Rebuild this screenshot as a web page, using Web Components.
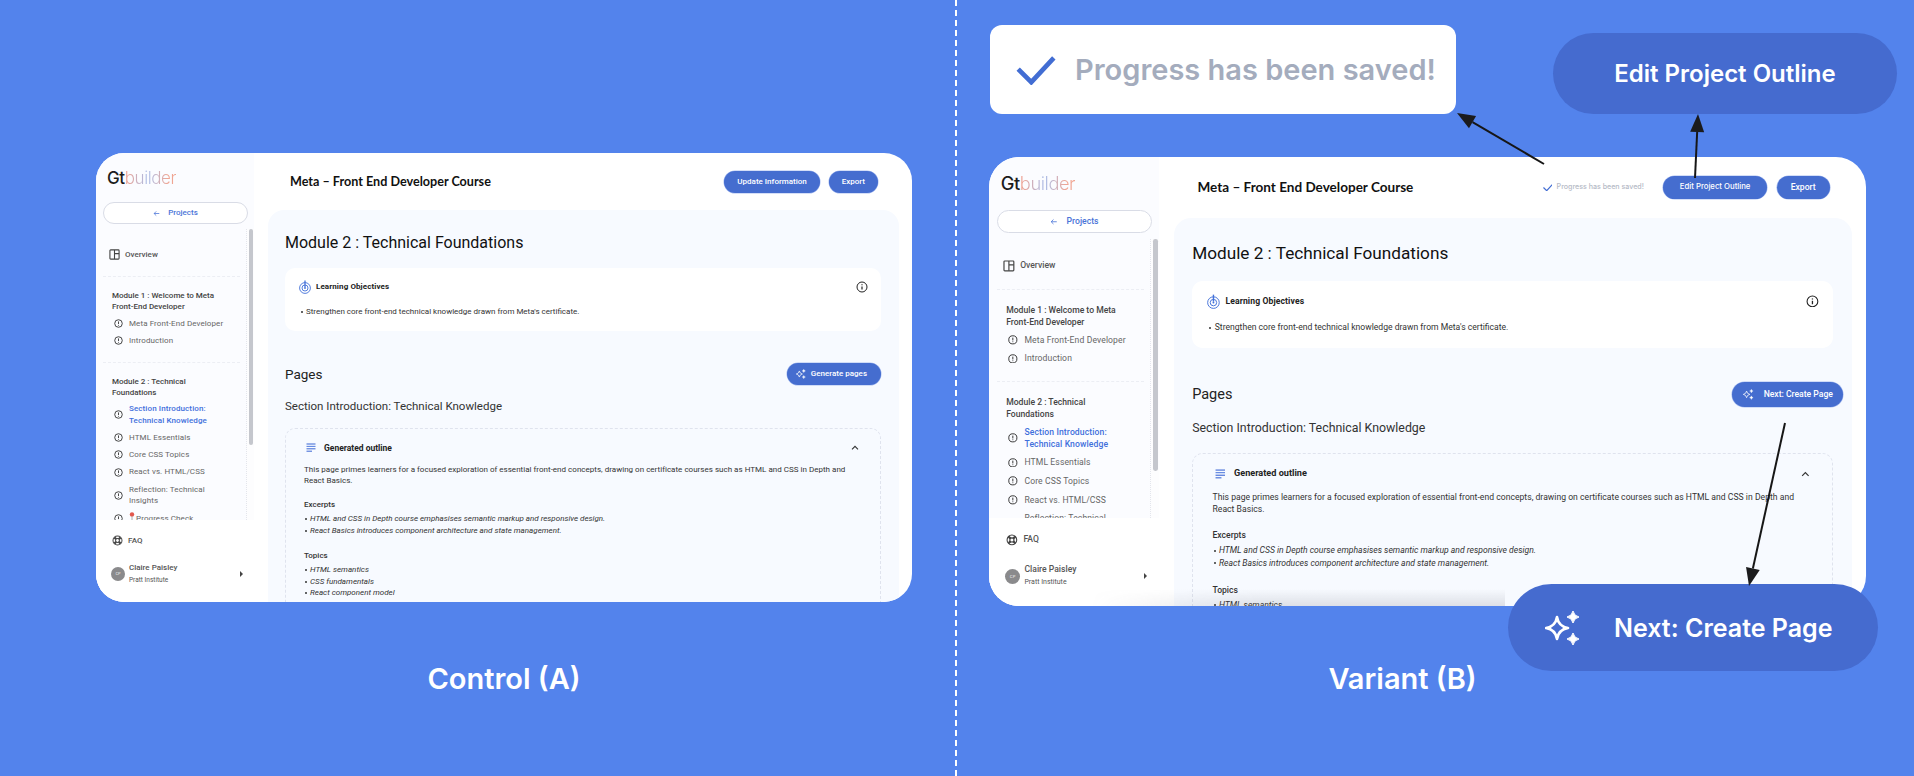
<!DOCTYPE html>
<html lang="en">
<head>
<meta charset="utf-8">
<title>Control and variant</title>
<style>
  html, body { margin: 0; height: 776px; overflow: hidden; background: #5383ec; font-family: Roboto, sans-serif; }
</style>
</head>
<body>
<ab-stage>
  <ab-column slot="control" caption="Control (A)">
    <app-card heading="Meta – Front End Developer Course">
      <pill-btn slot="actions">Update Information</pill-btn>
      <pill-btn slot="actions">Export</pill-btn>
      <pill-btn slot="pages-action" sparkle>Generate pages</pill-btn>
    </app-card>
  </ab-column>
  <ab-column slot="variant" caption="Variant (B)" shifted>
    <app-card heading="Meta – Front End Developer Course" variant>
      <saved-note slot="actions"></saved-note>
      <pill-btn slot="actions" tight>Edit Project Outline</pill-btn>
      <pill-btn slot="actions">Export</pill-btn>
      <pill-btn slot="pages-action" sparkle tall>Next: Create Page</pill-btn>
    </app-card>
  </ab-column>
  <saved-callout slot="over"></saved-callout>
  <big-pill slot="over" name="edit">Edit Project Outline</big-pill>
  <big-pill slot="over" name="next">Next: Create Page</big-pill>
  <arrow-layer slot="over"></arrow-layer>
</ab-stage>

<script>
const ICONS = {
  alert: '<svg viewBox="0 0 10 10" fill="none" stroke="currentColor"><circle cx="5" cy="5" r="4.2" stroke-width="1"/><path d="M5 2.7v2.9M5 6.6v.8" stroke-width="1"/></svg>',
  layout: '<svg viewBox="0 0 12 12" fill="none" stroke="currentColor" stroke-width="1.2"><rect x="1" y="1" width="10" height="10" rx=".8"/><path d="M6 1v10M6 5h5"/></svg>',
  buoy: '<svg viewBox="0 0 12 12" fill="none" stroke="currentColor"><circle cx="6" cy="6" r="4.9" stroke-width="1.1"/><circle cx="6" cy="6" r="2.1" stroke-width="1.1"/><path d="M2.6 2.6l2 2M9.4 2.6l-2 2M2.6 9.4l2-2M9.4 9.4l-2-2" stroke-width="2.4"/></svg>',
  target: '<svg viewBox="0 0 12 14" fill="none" stroke="#4472d9"><circle cx="6" cy="8" r="5.4" stroke-width=".9"/><circle cx="6" cy="8" r="3" stroke-width=".9"/><path d="M6 .6v6.6" stroke-width="1.3"/><circle cx="6" cy="8" r=".9" fill="#4472d9" stroke="none"/></svg>',
  info: '<svg viewBox="0 0 12 12" fill="none" stroke="#222"><circle cx="6" cy="6" r="5" stroke-width="1"/><path d="M6 5.4v3.2" stroke-width="1.2"/><path d="M6 3.2v1" stroke-width="1.2"/></svg>',
  lines: '<svg viewBox="0 0 10 10" fill="none" stroke-width="1.1"><path d="M.5 1h9" stroke="#4a72d8"/><path d="M.5 3.4h9" stroke="#5f86e2"/><path d="M.5 5.8h9" stroke="#4a72d8"/><path d="M.5 8.2h5.5" stroke="#4a72d8"/></svg>',
  chevron: '<svg viewBox="0 0 10 10" fill="none" stroke="#333" stroke-width="1.1"><path d="M2 6.4l3-3 3 3"/></svg>',
  back: '<svg viewBox="0 0 10 10" fill="none" stroke="#4a74d8" stroke-width="1.1"><path d="M9 5H1.6M4.6 2L1.6 5l3 3"/></svg>',
  sparkle: '<svg viewBox="0 0 36 36"><path d="M12 7Q13.5 16.5 23 18Q13.5 19.5 12 29Q10.5 19.5 1 18Q10.5 16.5 12 7Z" fill="none" stroke="currentColor" stroke-width="2.6" stroke-linejoin="round"/><path d="M28 1Q29 6 34 7Q29 8 28 13Q27 8 22 7Q27 6 28 1Z" fill="currentColor" stroke="currentColor"/><path d="M28 23Q29 28 34 29Q29 30 28 35Q27 30 22 29Q27 28 28 23Z" fill="currentColor" stroke="currentColor"/></svg>',
  pin: '<svg viewBox="0 0 6 10"><path d="M3 4v5.6" stroke="#999" stroke-width=".8"/><circle cx="3" cy="2.4" r="2.2" fill="#e2574c"/></svg>',
  check: '<svg viewBox="0 0 42 32" fill="none" stroke="#426dd3" stroke-width="5"><path d="M2 15l14 14L40 3"/></svg>'
};

class AbStage extends HTMLElement {
  constructor() {
    super();
    this.attachShadow({ mode: 'open' });
    this.shadowRoot.innerHTML = `
      <style>
        :host { display: block; position: relative; width: 1914px; height: 776px; overflow: hidden; }
        .cols { display: grid; grid-template-columns: 955px 959px; height: 776px; }
      </style>
      <div class="cols"><slot name="control"></slot><slot name="variant"></slot></div>
      <slot name="over"></slot>`;
  }
}

class AbColumn extends HTMLElement {
  constructor() {
    super();
    this.attachShadow({ mode: 'open' });
    this.shadowRoot.innerHTML = `
      <style>
        :host { display: flex; flex-direction: column; height: 776px; box-sizing: border-box; padding: 153px 0 0 96px; }
        :host([shifted]) { padding: 157px 0 0 32px; border-left: 2px dashed #fff; }
        h2 { margin: 59px 0 0; width: 816px; text-align: center; color: #fff; font: 600 29px/36px Inter, sans-serif; }
        :host([shifted]) h2 { margin: 55px 0 0; width: 827px; }
      </style>
      <slot></slot>
      <h2>${this.getAttribute('caption')}</h2>`;
  }
}

class AppCard extends HTMLElement {
  constructor() {
    super();
    this.attachShadow({ mode: 'open' });
    this.shadowRoot.innerHTML = `
      <style>
        :host { display: flex; position: relative; width: 816px; height: 449px; background: #fff; border-radius: 28px; overflow: hidden; color: #222; font-family: Roboto, sans-serif; }
        :host([variant]) { zoom: 1.075; height: 418px; }
        main { flex: 1; min-width: 0; display: flex; flex-direction: column; }
        header { flex: none; height: 57px; display: flex; align-items: center; justify-content: space-between; padding: 0 34px 0 36px; }
        h1 { margin: 0; font: 700 12px/16px Lato, sans-serif; font-size: 12.6px; color: #111; white-space: nowrap; }
        .actions { display: flex; align-items: center; gap: 9px; }
        .fade { display: none; }
        :host([variant]) .fade { display: block; position: absolute; left: 95px; width: 385px; bottom: 0; height: 16px; background: linear-gradient(rgba(90,90,100,0), rgba(90,90,100,.16)); -webkit-mask-image: linear-gradient(90deg, transparent, #000 40%); }
      </style>
      <side-bar></side-bar>
      <main>
        <header>
          <h1>${this.getAttribute('heading')}</h1>
          <div class="actions"><slot name="actions"></slot></div>
        </header>
        <module-panel><slot name="pages-action" slot="pages-action"></slot></module-panel>
      </main>
      <div class="fade"></div>`;
  }
}

class SideBar extends HTMLElement {
  constructor() {
    super();
    this.attachShadow({ mode: 'open' });
    this.shadowRoot.innerHTML = `
      <style>
        :host { flex: none; width: 158px; height: 100%; display: flex; flex-direction: column; background: #fbfcff; }
        .logo { margin: 16px 0 0 11px; font: 500 17px/18px Inter, sans-serif; letter-spacing: -.4px; color: #1c1c1c; }
        .logo span { font-weight: 300; background: linear-gradient(90deg, #f2a08c, #a9bde9 45%, #f0a592 85%); -webkit-background-clip: text; background-clip: text; color: transparent; }
        .projects { margin: 15px 0 0 7px; width: 145px; height: 22px; box-sizing: border-box; border: 1px solid #d9dce6; border-radius: 11px; background: #fff; display: flex; align-items: center; justify-content: center; gap: 8px; color: #4a74d8; font: 500 8px/10px Roboto, sans-serif; }
        .projects svg { width: 7px; height: 7px; }
        .nav { flex: 1; min-height: 0; margin-top: 5px; position: relative; overflow: hidden; padding-left: 7px; border-right: 0; }
        .track { position: absolute; top: 0; right: 0; bottom: 0; width: 8px; border-left: 1px dotted #e3e5ec; box-sizing: border-box; background: #fdfdfe; }
        .thumb { position: absolute; top: 0; right: 1px; width: 4px; height: 216px; border-radius: 2px; background: #c5c7cd; }
        .sep { width: 137px; padding-top: 17px; padding-bottom: 13px; border-bottom: 1px dashed #eceef4; }
        .bottom { flex: none; height: 82px; box-sizing: border-box; padding: 12px 0 0 16px; background: #fff; margin-right: 0; }
        .row { display: flex; align-items: center; gap: 5px; height: 17px; font: 500 8px/11px Roboto, sans-serif; color: #555; }
        .row ui-icon { width: 11px; height: 11px; color: #444; }
        .person { display: flex; align-items: center; gap: 4px; margin: 13px 0 0 -1px; position: relative; }
        .avatar { width: 14px; height: 14px; border-radius: 50%; background: #8a8a8c; color: #ddd; font: 500 4px/14px Roboto, sans-serif; text-align: center; }
        .name { font: 500 8px/12px Roboto, sans-serif; color: #555; }
        .org { font: 400 6.5px/12px Roboto, sans-serif; color: #555; }
        .caret { position: absolute; left: 129px; top: 9px; width: 0; height: 0; border-left: 3px solid #444; border-top: 3px solid transparent; border-bottom: 3px solid transparent; }
        .info { margin-left: 0; }
      </style>
      <div class="logo">Gt<span>builder</span></div>
      <div class="projects">${ICONS.back}<span>Projects</span></div>
      <div class="nav">
        <div class="sep"><div class="row" style="padding-left:6px"><ui-icon name="layout"></ui-icon>Overview</div></div>
        <nav-group heading="Module 1 : Welcome to Meta Front-End Developer">
          <nav-item>Meta Front-End Developer</nav-item>
          <nav-item>Introduction</nav-item>
        </nav-group>
        <nav-group heading="Module 2 : Technical Foundations">
          <nav-item active>Section Introduction: Technical Knowledge</nav-item>
          <nav-item>HTML Essentials</nav-item>
          <nav-item>Core CSS Topics</nav-item>
          <nav-item>React vs. HTML/CSS</nav-item>
          <nav-item>Reflection: Technical Insights</nav-item>
          <nav-item><ui-icon name="pin" style="width:6px;height:10px;vertical-align:-1px;margin-right:1px"></ui-icon>Progress Check</nav-item>
        </nav-group>
        <div class="track"><div class="thumb"></div></div>
      </div>
      <div class="bottom">
        <div class="row"><ui-icon name="buoy"></ui-icon>FAQ</div>
        <div class="person">
          <div class="avatar">CP</div>
          <div class="info"><div class="name">Claire Paisley</div><div class="org">Pratt Institute</div></div>
          <div class="caret"></div>
        </div>
      </div>`;
  }
}

class NavGroup extends HTMLElement {
  constructor() {
    super();
    this.attachShadow({ mode: 'open' });
    this.shadowRoot.innerHTML = `
      <style>
        :host { display: block; width: 137px; box-sizing: border-box; padding: 13px 0 12.5px 9px; border-bottom: 1px dashed #eceef4; }
        :host(:last-of-type) { border-bottom: 0; }
        h3 { margin: 0 0 2px; width: 110px; font: 500 8px/11.3px Roboto, sans-serif; color: #444; }
      </style>
      <h3>${this.getAttribute('heading')}</h3>
      <slot></slot>`;
  }
}

class NavItem extends HTMLElement {
  constructor() {
    super();
    this.attachShadow({ mode: 'open' });
    this.shadowRoot.innerHTML = `
      <style>
        :host { display: flex; align-items: center; gap: 6px; padding: 3px 0 3px 2px; width: 112px; font: 400 8px/11.3px Roboto, sans-serif; letter-spacing: .1px; color: #666; }
        :host([active]) { color: #3f6fdc; font-weight: 500; }
        svg { flex: none; width: 9px; height: 9px; color: #333; }
      </style>
      ${ICONS.alert}<span><slot></slot></span>`;
  }
}

class ModulePanel extends HTMLElement {
  constructor() {
    super();
    this.attachShadow({ mode: 'open' });
    this.shadowRoot.innerHTML = `
      <style>
        :host { flex: 1; min-height: 0; display: block; margin: 0 13px 0 14px; padding: 23px 18px 0 17px; background: #f7faff; border-radius: 16px 16px 0 0; overflow: hidden; }
        h2 { margin: 0; font: 400 16px/20px Roboto, sans-serif; color: #111; }
        .goals { margin-top: 15px; height: 63px; box-sizing: border-box; padding: 12px 13px 0 14px; background: #fff; border-radius: 10px; }
        .goals-head { display: flex; align-items: center; gap: 5px; height: 14px; font: 700 8px/14px Roboto, sans-serif; letter-spacing: .1px; color: #222; }
        .goals-head svg:first-child { width: 12px; height: 14px; }
        .goals-head svg:last-child { width: 12px; height: 12px; margin-left: auto; }
        ul { margin: 0; padding: 0 0 0 6px; list-style: none; }
        li { position: relative; font: 400 8px/11.4px Roboto, sans-serif; color: #333; }
        li::before { content: ""; position: absolute; left: -5px; top: 5px; width: 2px; height: 2px; border-radius: 50%; background: #333; }
        .goals ul { margin-top: 12px; padding-left: 7px; }
        .pages { display: flex; align-items: center; justify-content: space-between; height: 22px; margin-top: 32px; }
        h3 { margin: 0; font: 400 13.5px/18px Roboto, sans-serif; color: #222; }
        .page-name { margin: 14px 0 0; font: 400 11.5px/14px Roboto, sans-serif; color: #333; }
        .outline { margin-top: 15px; height: 220px; box-sizing: border-box; padding: 12px 18px 0; border: 1px dashed #dfe3ee; border-radius: 10px; }
        .outline-head { display: flex; align-items: center; gap: 8px; height: 14px; padding: 0 2px; font: 700 8.5px/14px Roboto, sans-serif; color: #222; }
        .outline-head svg:first-child { width: 10px; height: 10px; }
        .outline-head svg:last-child { width: 10px; height: 10px; margin-left: auto; }
        p { margin: 0; font: 400 8px/11.4px Roboto, sans-serif; letter-spacing: .02px; color: #333; }
        .lead { margin-top: 9px; }
        h4 { margin: 12.6px 0 2.6px; padding-top: 0; font: 500 8px/11.4px Roboto, sans-serif; color: #333; }
        .outline li { font-style: italic; }
        .gap { height: 2px; }
      </style>
      <h2>Module 2 : Technical Foundations</h2>
      <div class="goals">
        <div class="goals-head">${ICONS.target}<span>Learning Objectives</span>${ICONS.info}</div>
        <ul><li>Strengthen core front-end technical knowledge drawn from Meta's certificate.</li></ul>
      </div>
      <div class="pages"><h3>Pages</h3><slot name="pages-action"></slot></div>
      <div class="page-name">Section Introduction: Technical Knowledge</div>
      <div class="outline">
        <div class="outline-head">${ICONS.lines}<span>Generated outline</span>${ICONS.chevron}</div>
        <p class="lead">This page primes learners for a focused exploration of essential front-end concepts, drawing on certificate courses such as HTML and CSS in Depth and React Basics.</p>
        <h4>Excerpts</h4>
        <ul>
          <li>HTML and CSS in Depth course emphasises semantic markup and responsive design.</li>
          <li>React Basics introduces component architecture and state management.</li>
        </ul>
        <h4 style="margin-top:14px">Topics</h4>
        <ul>
          <li>HTML semantics</li>
          <li>CSS fundamentals</li>
          <li>React component model</li>
        </ul>
      </div>`;
  }
}

class PillBtn extends HTMLElement {
  constructor() {
    super();
    this.attachShadow({ mode: 'open' });
    const icon = this.hasAttribute('sparkle') ? ICONS.sparkle : '';
    this.shadowRoot.innerHTML = `
      <style>
        :host { display: inline-flex; align-items: center; gap: 5px; height: 22px; box-sizing: border-box; padding: 0 13px; border-radius: 11px; background: #456dcf; box-shadow: 0 0 0 .5px #a9bdf0; color: #fff; font: 500 8px/10px Roboto, sans-serif; white-space: nowrap; }
        :host([sparkle]) { padding: 0 14px 0 9px; }
        :host([tall]) { height: 24px; border-radius: 12px; gap: 9px; padding: 0 9px 0 10px; margin-right: -9px; }
        :host([tight]) { padding: 0 15.5px; font: 500 7.2px/10px Inter, sans-serif; }
        svg { width: 10px; height: 10px; }
      </style>
      ${icon}<slot></slot>`;
  }
}

class SavedNote extends HTMLElement {
  constructor() {
    super();
    this.attachShadow({ mode: 'open' });
    this.shadowRoot.innerHTML = `
      <style>
        :host { display: inline-flex; align-items: center; gap: 4px; margin-right: 9px; color: #b5bac6; font: 500 6.6px/10px Inter, sans-serif; white-space: nowrap; }
        svg { width: 9px; height: 7px; }
      </style>
      ${ICONS.check}<span>Progress has been saved!</span>`;
  }
}

class SavedCallout extends HTMLElement {
  constructor() {
    super();
    this.attachShadow({ mode: 'open' });
    this.shadowRoot.innerHTML = `
      <style>
        :host { position: absolute; left: 990px; top: 25px; width: 466px; height: 89px; box-sizing: border-box; padding-left: 26px; display: flex; align-items: center; gap: 19px; background: #fff; border-radius: 12px; color: #a4acbd; font: 600 29px/36px Inter, sans-serif; white-space: nowrap; }
        svg { width: 40px; height: 30px; flex: none; }
      </style>
      ${ICONS.check}<span>Progress has been saved!</span>`;
  }
}

class BigPill extends HTMLElement {
  constructor() {
    super();
    this.attachShadow({ mode: 'open' });
    const isNext = this.getAttribute('name') === 'next';
    this.shadowRoot.innerHTML = `
      <style>
        :host { position: absolute; display: flex; align-items: center; box-sizing: border-box; background: #456bcf; color: #fff; white-space: nowrap; font-family: Inter, sans-serif; font-weight: 600; }
        :host([name=edit]) { left: 1553px; top: 33px; width: 344px; height: 81px; border-radius: 41px; justify-content: center; font-size: 24px; }
        :host([name=next]) { left: 1508px; top: 584px; width: 370px; height: 87px; border-radius: 44px; padding-left: 37px; gap: 33px; font-size: 25px; }
        svg { width: 36px; height: 36px; flex: none; }
      </style>
      ${isNext ? ICONS.sparkle : ''}<slot></slot>`;
  }
}

class ArrowLayer extends HTMLElement {
  constructor() {
    super();
    this.attachShadow({ mode: 'open' });
    const lines = [[1544, 164, 1457, 113], [1695, 178, 1698, 114], [1785, 423, 1749, 586]];
    const parts = lines.map(([x1, y1, x2, y2]) => {
      const len = Math.hypot(x2 - x1, y2 - y1);
      const ux = (x2 - x1) / len, uy = (y2 - y1) / len;
      const bx = x2 - ux * 18, by = y2 - uy * 18;
      const head = [[x2, y2], [bx - uy * 7, by + ux * 7], [bx + uy * 7, by - ux * 7]].map(p => p.join(',')).join(' ');
      return `<line x1="${x1}" y1="${y1}" x2="${bx}" y2="${by}" stroke="#161616" stroke-width="2"/><polygon points="${head}" fill="#1b1b1d"/>`;
    }).join('');
    this.shadowRoot.innerHTML = `
      <style>
        :host { position: absolute; left: 0; top: 0; width: 1914px; height: 776px; pointer-events: none; }
        svg { display: block; }
      </style>
      <svg width="1914" height="776">${parts}</svg>`;
  }
}

class UiIcon extends HTMLElement {
  constructor() {
    super();
    this.attachShadow({ mode: 'open' });
    this.shadowRoot.innerHTML = `
      <style>
        :host { display: inline-block; flex: none; }
        svg { display: block; width: 100%; height: 100%; }
      </style>
      ${ICONS[this.getAttribute('name')]}`;
  }
}

customElements.define('ui-icon', UiIcon);
customElements.define('nav-item', NavItem);
customElements.define('nav-group', NavGroup);
customElements.define('side-bar', SideBar);
customElements.define('module-panel', ModulePanel);
customElements.define('pill-btn', PillBtn);
customElements.define('saved-note', SavedNote);
customElements.define('app-card', AppCard);
customElements.define('ab-column', AbColumn);
customElements.define('saved-callout', SavedCallout);
customElements.define('big-pill', BigPill);
customElements.define('arrow-layer', ArrowLayer);
customElements.define('ab-stage', AbStage);
</script>
</body>
</html>
